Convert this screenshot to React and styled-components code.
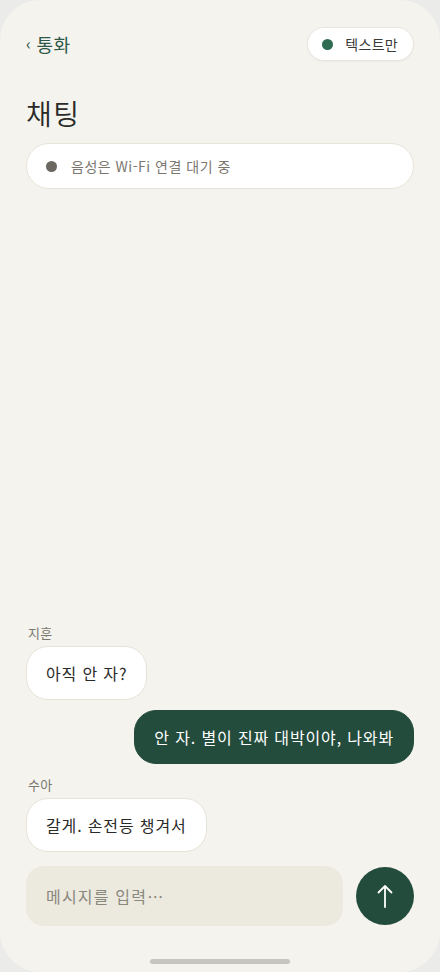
import React from "react";
import styled, { createGlobalStyle } from "styled-components";

const GlobalStyle = createGlobalStyle`
  html, body {
    margin: 0;
    padding: 0;
    background: #ebebe9;
  }
  * {
    box-sizing: border-box;
  }
`;

const Screen = styled.div`
  width: 440px;
  height: 972px;
  background: #f4f3ee;
  border-radius: 40px;
  display: flex;
  flex-direction: column;
  padding: 27px 26px 0 26px;
  font-family: "Noto Sans CJK KR", "Noto Sans", sans-serif;
  color: #2a2a28;
  overflow: hidden;
`;

const Header = styled.div`
  display: flex;
  align-items: center;
  justify-content: space-between;
  height: 34px;
`;

const BackLink = styled.div`
  display: flex;
  align-items: center;
  gap: 5px;
  font-size: 18px;
  color: #2d5746;
  letter-spacing: 0.6px;
`;

const Chevron = styled.span`
  font-size: 16px;
  line-height: 1;
  margin-top: -2px;
`;

const ModePill = styled.div`
  display: flex;
  align-items: center;
  gap: 12px;
  height: 34px;
  padding: 0 15px 0 14px;
  background: #ffffff;
  border: 1px solid #e8e5dc;
  border-radius: 17px;
  font-size: 14px;
  letter-spacing: 0.3px;
  color: #3a3a36;
  box-shadow: 0 1px 2px rgba(0, 0, 0, 0.04);
`;

const Dot = styled.span`
  width: 11px;
  height: 11px;
  border-radius: 50%;
  background: ${(p) => p.$color};
  flex-shrink: 0;
`;

const Title = styled.h1`
  margin: 34px 0 0 0;
  font-size: 28px;
  line-height: 36px;
  font-weight: 350;
  letter-spacing: 1.5px;
  color: #2a2a28;
`;

const StatusCard = styled.div`
  margin-top: 12px;
  height: 46px;
  display: flex;
  align-items: center;
  gap: 14px;
  padding: 0 19px;
  background: #ffffff;
  border: 1px solid #e6e3d8;
  border-radius: 23px;
  font-size: 14px;
  letter-spacing: 0.5px;
  color: #7a776f;
`;

const Messages = styled.div`
  flex: 1;
  display: flex;
  flex-direction: column;
  justify-content: flex-end;
  gap: 10px;
  padding-bottom: 14px;
`;

const Group = styled.div`
  display: flex;
  flex-direction: column;
  align-items: ${(p) => (p.$mine ? "flex-end" : "flex-start")};
  gap: 4px;
  margin-top: ${(p) => (p.$mine ? "0" : "2px")};
`;

const Sender = styled.div`
  font-size: 13px;
  line-height: 18px;
  letter-spacing: 0.4px;
  color: #7a776f;
  padding-left: 2px;
`;

const Bubble = styled.div`
  padding: 14px 19px;
  font-size: 16px;
  line-height: 24px;
  letter-spacing: 0.85px;
  border-radius: 22px;
  background: ${(p) => (p.$mine ? "#234c3c" : "#ffffff")};
  color: ${(p) => (p.$mine ? "#ffffff" : "#2a2a28")};
  border: 1px solid ${(p) => (p.$mine ? "#234c3c" : "#e6e3d8")};
`;

const Composer = styled.div`
  display: flex;
  align-items: center;
  gap: 13px;
`;

const Input = styled.div`
  flex: 1;
  height: 60px;
  display: flex;
  align-items: center;
  padding: 0 20px;
  background: #ece9df;
  border-radius: 18px;
  font-size: 16px;
  letter-spacing: 1.2px;
  color: #8a877d;
`;

const SendButton = styled.div`
  width: 58px;
  height: 58px;
  border-radius: 50%;
  background: #234c3c;
  display: flex;
  align-items: center;
  justify-content: center;
`;

const HomeBar = styled.div`
  display: flex;
  justify-content: center;
  padding: 33px 0 8px;
`;

const Indicator = styled.div`
  width: 140px;
  height: 5px;
  border-radius: 3px;
  background: #c6c5bf;
`;

const messages = [
  { from: "지훈", text: "아직 안 자?" },
  { mine: true, text: "안 자. 별이 진짜 대박이야, 나와봐" },
  { from: "수아", text: "갈게. 손전등 챙겨서" },
];

export default function App() {
  return (
    <>
      <GlobalStyle />
      <Screen lang="ko">
        <Header>
          <BackLink>
            <Chevron>‹</Chevron>
            통화
          </BackLink>
          <ModePill>
            <Dot $color="#2e6b50" />
            텍스트만
          </ModePill>
        </Header>
        <Title>채팅</Title>
        <StatusCard>
          <Dot $color="#6b6862" />
          음성은 Wi-Fi 연결 대기 중
        </StatusCard>
        <Messages>
          {messages.map((m, i) => (
            <Group key={i} $mine={m.mine}>
              {m.from && <Sender>{m.from}</Sender>}
              <Bubble $mine={m.mine}>{m.text}</Bubble>
            </Group>
          ))}
        </Messages>
        <Composer>
          <Input>메시지를 입력⋯</Input>
          <SendButton>
            <svg width="20" height="26" viewBox="0 0 20 26" fill="none">
              <path
                d="M10 24V3M3.5 9.5L10 3l6.5 6.5"
                stroke="#ffffff"
                strokeWidth="1.8"
                strokeLinecap="round"
                strokeLinejoin="round"
              />
            </svg>
          </SendButton>
        </Composer>
        <HomeBar>
          <Indicator />
        </HomeBar>
      </Screen>
    </>
  );
}
